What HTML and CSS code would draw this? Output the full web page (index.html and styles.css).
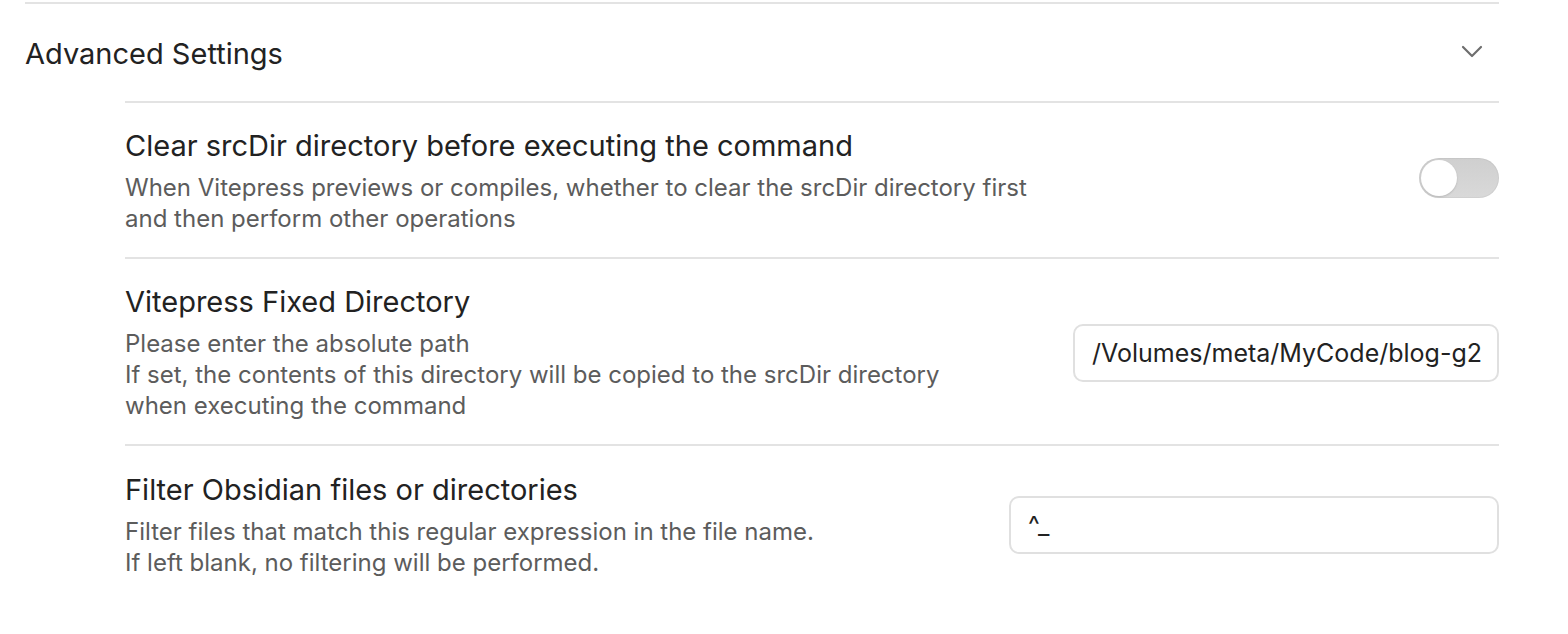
FILE: index.html
```html
<!DOCTYPE html>
<html lang="en">
<head>
<meta charset="utf-8">
<title>Advanced Settings</title>
<link rel="stylesheet" href="styles.css">
</head>
<body>
<div class="settings">
  <div class="group">
    <div class="group-header">
      <div class="group-title">Advanced Settings</div>
      <svg class="chevron" width="22" height="14" viewBox="0 0 22 14" fill="none">
        <path d="M2 2 L11 11 L20 2" stroke="#6e6e6e" stroke-width="2.2" stroke-linecap="round" stroke-linejoin="round"/>
      </svg>
    </div>
    <div class="group-body">
      <div class="item">
        <div class="info">
          <div class="name">Clear srcDir directory before executing the command</div>
          <div class="desc">When Vitepress previews or compiles, whether to clear the srcDir directory first<br>and then perform other operations</div>
        </div>
        <div class="control">
          <div class="toggle"><div class="knob"></div></div>
        </div>
      </div>
      <div class="item">
        <div class="info">
          <div class="name">Vitepress Fixed Directory</div>
          <div class="desc">Please enter the absolute path<br>If set, the contents of this directory will be copied to the srcDir directory<br>when executing the command</div>
        </div>
        <div class="control">
          <input class="text-input input-path" type="text" value="/Volumes/meta/MyCode/blog-g2">
        </div>
      </div>
      <div class="item">
        <div class="info">
          <div class="name">Filter Obsidian files or directories</div>
          <div class="desc">Filter files that match this regular expression in the file name.<br>If left blank, no filtering will be performed.</div>
        </div>
        <div class="control">
          <input class="text-input input-filter" type="text" value="^_">
        </div>
      </div>
    </div>
  </div>
</div>
</body>
</html>
```
FILE: styles.css
```css
html, body {
  margin: 0;
  padding: 0;
  background: #ffffff;
}

body {
  font-family: Inter, "Noto Sans", "Liberation Sans", sans-serif;
  color: #222222;
  -webkit-font-smoothing: antialiased;
}

.settings {
  padding: 2px 69px 0 25px;
}

.group {
  border-top: 2px solid #e3e3e3;
}

.group-header {
  display: flex;
  align-items: center;
  justify-content: space-between;
  height: 97px;
}

.group-title {
  font-size: 29px;
  color: #222222;
  padding-top: 2px;
}

.chevron {
  margin-right: 16px;
  margin-top: -2px;
}

.group-body {
  margin-left: 100px;
}

.item {
  display: flex;
  align-items: center;
  justify-content: space-between;
  border-top: 2px solid #e3e3e3;
  padding: 25px 0 23px;
}

.item + .item + .item {
  padding-top: 26px;
}

.info {
  flex: 1 1 auto;
}

.name {
  font-size: 29px;
  line-height: 36px;
  color: #222222;
}

.desc {
  margin-top: 8px;
  font-size: 24px;
  line-height: 31px;
  color: #5c5c5c;
}

.control {
  flex: 0 0 auto;
  display: flex;
  justify-content: flex-end;
}

.toggle {
  width: 80px;
  height: 40px;
  margin-bottom: 7px;
  border-radius: 20px;
  background: linear-gradient(#cfcfcf, #d9d9d9);
  box-shadow: inset 0 0 0 1px rgba(0, 0, 0, 0.04);
  padding: 2px;
  box-sizing: border-box;
  display: flex;
  align-items: center;
}

.knob {
  width: 36px;
  height: 36px;
  border-radius: 50%;
  background: #ffffff;
  box-shadow: 0 1px 2px rgba(0, 0, 0, 0.15);
}

.text-input {
  box-sizing: border-box;
  height: 58px;
  border: 2px solid #e0e0e0;
  border-radius: 10px;
  background: #ffffff;
  font-family: Inter, "Noto Sans", "Liberation Sans", sans-serif;
  font-size: 25px;
  color: #222222;
  padding: 0 6px 0 17px;
  outline: none;
}

.input-path {
  width: 426px;
}

.input-filter {
  width: 490px;
}
```
